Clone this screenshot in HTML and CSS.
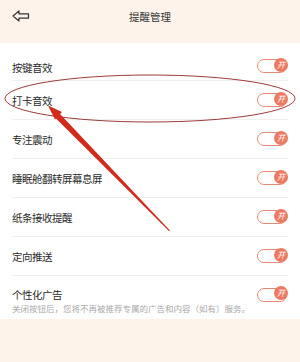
FILE: index.html
```html
<!DOCTYPE html>
<html lang="zh-CN">
<head>
  <meta charset="UTF-8" />
  <meta name="viewport" content="width=device-width, initial-scale=1.0" />
  <title>提醒管理</title>
  <link rel="stylesheet" href="styles.css">
</head>
<body>
  <header class="topbar">
    <svg class="back" width="18" height="12" viewBox="0 0 18 12">
      <path d="M1 6 L7 1 L7 3.8 L16.5 3.8 L16.5 8.2 L7 8.2 L7 11 Z" fill="none" stroke="#333" stroke-width="1.2" stroke-linejoin="round"/>
    </svg>
    <div class="title">提醒管理</div>
  </header>

  <!-- 设置列表 -->
  <div class="card">
    <div class="row first"><span>按键音效</span><i class="switch"><b>开</b></i></div>
    <div class="row"><span>打卡音效</span><i class="switch"><b>开</b></i></div>
    <div class="row"><span>专注震动</span><i class="switch"><b>开</b></i></div>
    <div class="row"><span>睡眠舱翻转屏幕息屏</span><i class="switch"><b>开</b></i></div>
    <div class="row"><span>纸条接收提醒</span><i class="switch"><b>开</b></i></div>
    <div class="row"><span>定向推送</span><i class="switch"><b>开</b></i></div>
    <div class="row last">
      <div class="line"><span>个性化广告</span><i class="switch"><b>开</b></i></div>
      <p class="note">关闭按钮后，您将不再被推荐专属的广告和内容（如有）服务。</p>
    </div>
  </div>

  <!-- 标注 -->
  <svg class="mark" width="300" height="362" viewBox="0 0 300 362">
    <ellipse cx="150" cy="98.5" rx="145" ry="23.5" fill="none" stroke="#9c3a3a" stroke-width="1"/>
    <polygon points="55.5,118 59.8,113.8 170,230.5 169.2,231.2" fill="#d42a1c"/>
    <polygon points="48,105.5 62,112 55,119.5" fill="#d42a1c"/>
  </svg>
</body>
</html>
```
FILE: styles.css
```css
body {
  margin: 0;
  width: 300px;
  height: 362px;
  background-color: #fdf3ea;
  font-family: "Noto Sans CJK SC", "Noto Sans", sans-serif;
  color: #2a2a2a;
  position: relative;
  overflow: hidden;
}
.topbar {
  height: 43px;
  display: flex;
  align-items: center;
  justify-content: center;
  position: relative;
}
.back {
  position: absolute;
  left: 12px;
  top: 10px;
}
.title {
  font-size: 10.5px;
  color: #333;
  margin-top: -11px;
}
.card {
  background-color: #fff;
  padding: 0 12px 5px;
}
.row {
  height: 38px;
  border-bottom: 1px solid #efefef;
  display: flex;
  align-items: center;
  justify-content: space-between;
  font-size: 10.5px;
  letter-spacing: -0.5px;
}
.row.first {
  height: 37px;
  align-items: flex-end;
}
.row.first span {
  margin-bottom: 5px;
}
.row.first .switch {
  margin-bottom: 7px;
}
.row.last {
  height: auto;
  border-bottom: none;
  display: block;
  padding-top: 11px;
}
.line {
  display: flex;
  align-items: center;
  justify-content: space-between;
}
.note {
  margin: 0;
  font-size: 8.5px;
  color: #aaa;
  letter-spacing: 0;
}
.switch {
  width: 28px;
  height: 12px;
  border: 1.5px solid #e98a74;
  border-radius: 8px;
  position: relative;
  margin-right: 1px;
}
.switch b {
  position: absolute;
  right: -2px;
  top: -2.5px;
  width: 14px;
  height: 14px;
  border-radius: 50%;
  background-color: #ec7a62;
  color: #fff;
  font-size: 8px;
  font-weight: normal;
  line-height: 14px;
  text-align: center;
  letter-spacing: 0;
}
.mark {
  position: absolute;
  left: 0;
  top: 0;
}
```
